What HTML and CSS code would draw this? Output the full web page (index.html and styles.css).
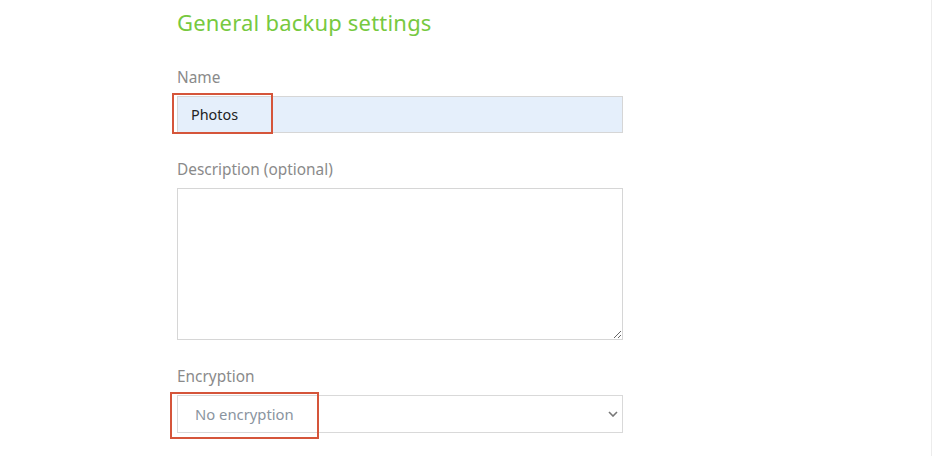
FILE: index.html
```html
<!DOCTYPE html>
<html>
<head>
<meta charset="utf-8">
<link rel="stylesheet" href="styles.css">
</head>
<body>
<div class="page">
  <main class="form">
    <h1 class="title">General backup settings</h1>
    <div class="field">
      <label class="label">Name</label>
      <div class="control-wrap">
        <input class="input input-filled" type="text" value="Photos">
        <span class="mark mark-name"></span>
      </div>
    </div>
    <div class="field">
      <label class="label">Description (optional)</label>
      <textarea class="textarea"></textarea>
    </div>
    <div class="field">
      <label class="label">Encryption</label>
      <div class="control-wrap">
        <div class="select">
          <span class="select-text">No encryption</span>
          <svg class="chev" width="10" height="6" viewBox="0 0 10 6"><path d="M1 1 L5 5 L9 1" fill="none" stroke="#777" stroke-width="1.6"/></svg>
        </div>
        <span class="mark mark-enc"></span>
      </div>
    </div>
  </main>
</div>
</body>
</html>
```
FILE: styles.css
```css
* { box-sizing: border-box; }
html, body { margin: 0; padding: 0; background: #fff; }
body {
  font-family: "Noto Sans", "Open Sans", sans-serif;
  width: 932px;
  height: 456px;
  overflow: hidden;
}
.page {
  height: 456px;
  border-right: 1px solid #ececec;
  padding-left: 177px;
}
.form {
  width: 446px;
  padding-top: 6px;
}
.title {
  margin: 0;
  font-size: 22px;
  font-weight: 400;
  color: #77c93f;
  line-height: 32px;
  letter-spacing: 0.2px;
}
.field { display: flex; flex-direction: column; }
.label {
  font-size: 15.4px;
  color: #8a8a8a;
  line-height: 20px;
  margin-bottom: 8px;
}
.field:nth-of-type(1) { margin-top: 30px; }
.field:nth-of-type(2) { margin-top: 27px; }
.field:nth-of-type(3) { margin-top: 27px; }
.control-wrap { position: relative; }
.input {
  display: block;
  width: 446px;
  height: 37px;
  border: 1px solid #d6d6d6;
  background: #fff;
  font-family: inherit;
  font-size: 14.4px;
  color: #222;
  padding: 0 13px;
  outline: none;
}
.input-filled { background: #e5effb; }
.textarea {
  display: block;
  width: 446px;
  height: 152px;
  border: 1px solid #d6d6d6;
  resize: vertical;
  font-family: inherit;
  outline: none;
  margin: 0;
}
.select {
  width: 446px;
  height: 38px;
  border: 1px solid #d9d9d9;
  display: flex;
  align-items: center;
  justify-content: space-between;
  padding: 0 4px 0 17px;
}
.select-text {
  font-size: 14.8px;
  color: #8a94a0;
}
.mark {
  position: absolute;
  border: 2px solid #d5553a;
  pointer-events: none;
}
.mark-name { left: -5px; top: -3px; width: 101px; height: 41px; }
.mark-enc { left: -7px; top: -3px; width: 149px; height: 47px; }
```
